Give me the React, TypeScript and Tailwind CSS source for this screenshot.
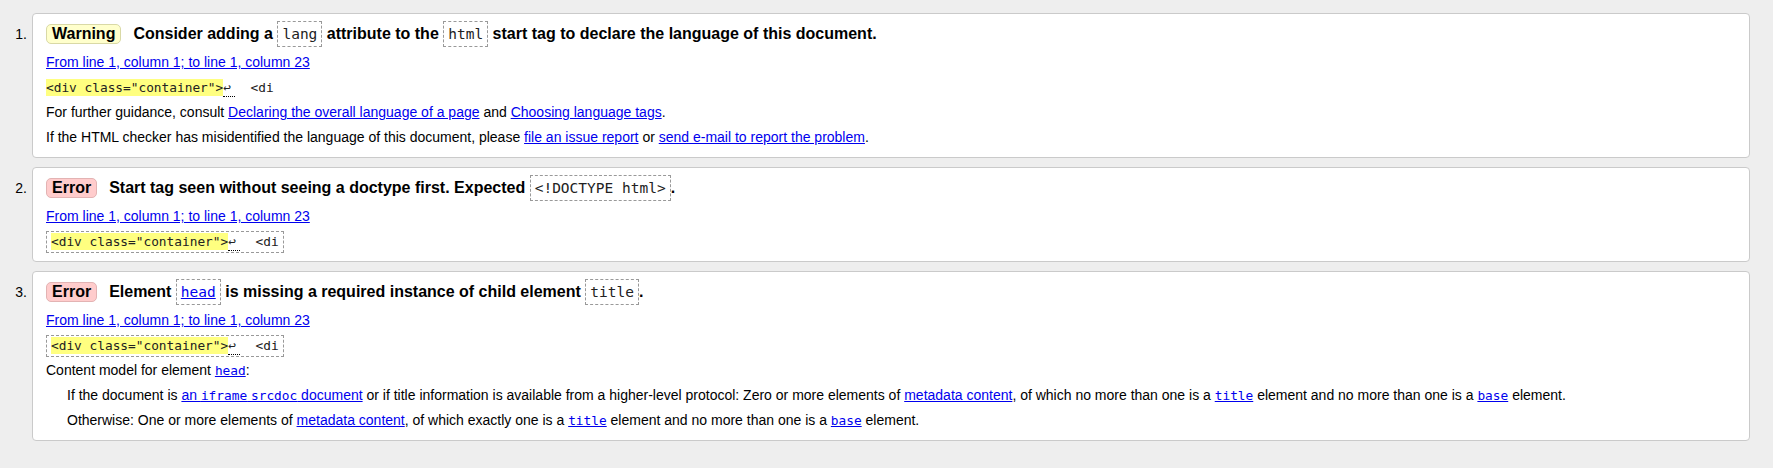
import React from 'react';

type Kind = 'warning' | 'error';

// small pieces used inside the message list
const Badge: React.FC<{ kind: Kind }> = ({ kind }) => (
  <span
    className={
      kind === 'warning'
        ? 'inline-block shrink-0 px-[5px] leading-[18px] border border-[#d9d9a6] rounded-[5px] bg-[#ffffcc] text-black'
        : 'inline-block shrink-0 px-[5px] leading-[18px] border border-[#e3b3b3] rounded-[5px] bg-[#ffcccc] text-black'
    }
  >
    {kind === 'warning' ? 'Warning' : 'Error'}
  </span>
);

// dashed code box used in message titles
const TitleCode: React.FC<{ children: React.ReactNode; href?: boolean }> = ({ children, href }) => (
  <code className="font-['DejaVu_Sans_Mono',monospace] font-normal text-[14.5px] text-[#222] border border-dashed border-[#999] px-[4px] py-[4px]">
    {href ? <a className="text-[#0000ee] underline">{children}</a> : children}
  </code>
);

const Link: React.FC<{ children: React.ReactNode }> = ({ children }) => (
  <a className="text-[#0000ee] underline cursor-pointer">{children}</a>
);

const Mono: React.FC<{ children: React.ReactNode }> = ({ children }) => (
  <code className="font-['DejaVu_Sans_Mono',monospace] text-[12.8px]">{children}</code>
);

const Extract: React.FC<{ boxed?: boolean }> = ({ boxed }) => (
  <div className="h-[25px] flex items-center">
    <code
      className={
        boxed
          ? "inline-block whitespace-pre font-['DejaVu_Sans_Mono',monospace] text-[12.8px] leading-[17px] text-[#222] border border-dashed border-[#999] px-[4px] py-[1px]"
          : "inline-block whitespace-pre font-['DejaVu_Sans_Mono',monospace] text-[12.8px] leading-[17px] text-[#222]"
      }
    >
      <span className="bg-[#ffff80] inline-block">&lt;div class="container"&gt;</span>
      <span className="inline-block w-[12px] border-b border-dotted border-black leading-[16px]">↩</span>
      {'  <di'}
    </code>
  </div>
);

const Location: React.FC = () => (
  <p className="mt-[3px] leading-[25px]">
    <Link>From line 1, column 1; to line 1, column 23</Link>
  </p>
);

const Message: React.FC<{ n: number; kind: Kind; title: React.ReactNode; children: React.ReactNode }> = ({
  n,
  kind,
  title,
  children,
}) => (
  <li className="flex items-baseline">
    <span className="w-[32px] shrink-0 pr-[5px] text-right text-[14px]">{n}.</span>
    <div className="flex-1 bg-white border border-[#cacaca] rounded-[4px] pl-[13px] pr-4 py-[7px]">
      <div className="flex items-center h-[26px] text-[16px] font-bold text-black">
        <Badge kind={kind} />
        <span className="ml-[12px] leading-[26px]">{title}</span>
      </div>
      {children}
    </div>
  </li>
);

export default function App() {
  return (
    <div className="min-h-screen w-full bg-[#eeeeee] font-['Liberation_Sans',Arial,sans-serif] text-[14px] text-black">
      <ol className="flex flex-col gap-[9px] pt-[13px] pr-[23px]">
        <Message
          n={1}
          kind="warning"
          title={
            <>
              Consider adding a <TitleCode>lang</TitleCode> attribute to the <TitleCode>html</TitleCode> start tag to
              declare the language of this document.
            </>
          }
        >
          <Location />
          <Extract />
          <p className="leading-[25px]">
            For further guidance, consult <Link>Declaring the overall language of a page</Link> and{' '}
            <Link>Choosing language tags</Link>.
          </p>
          <p className="leading-[25px]">
            If the HTML checker has misidentified the language of this document, please <Link>file an issue report</Link>{' '}
            or <Link>send e-mail to report the problem</Link>.
          </p>
        </Message>

        <Message
          n={2}
          kind="error"
          title={
            <>
              Start tag seen without seeing a doctype first. Expected <TitleCode>&lt;!DOCTYPE html&gt;</TitleCode>.
            </>
          }
        >
          <Location />
          <Extract boxed />
        </Message>

        <Message
          n={3}
          kind="error"
          title={
            <>
              Element <TitleCode href>head</TitleCode> is missing a required instance of child element{' '}
              <TitleCode>title</TitleCode>.
            </>
          }
        >
          <Location />
          <Extract boxed />
          <p className="leading-[25px]">
            Content model for element{' '}
            <Link>
              <Mono>head</Mono>
            </Link>
            :
          </p>
          <p className="leading-[25px] pl-[21px]">
            If the document is{' '}
            <Link>
              an <Mono>iframe</Mono> <Mono>srcdoc</Mono> document
            </Link>{' '}
            or if title information is available from a higher-level protocol: Zero or more elements of{' '}
            <Link>metadata content</Link>, of which no more than one is a{' '}
            <Link>
              <Mono>title</Mono>
            </Link>{' '}
            element and no more than one is a{' '}
            <Link>
              <Mono>base</Mono>
            </Link>{' '}
            element.
          </p>
          <p className="leading-[25px] pl-[21px]">
            Otherwise: One or more elements of <Link>metadata content</Link>, of which exactly one is a{' '}
            <Link>
              <Mono>title</Mono>
            </Link>{' '}
            element and no more than one is a{' '}
            <Link>
              <Mono>base</Mono>
            </Link>{' '}
            element.
          </p>
        </Message>
      </ol>
    </div>
  );
}
